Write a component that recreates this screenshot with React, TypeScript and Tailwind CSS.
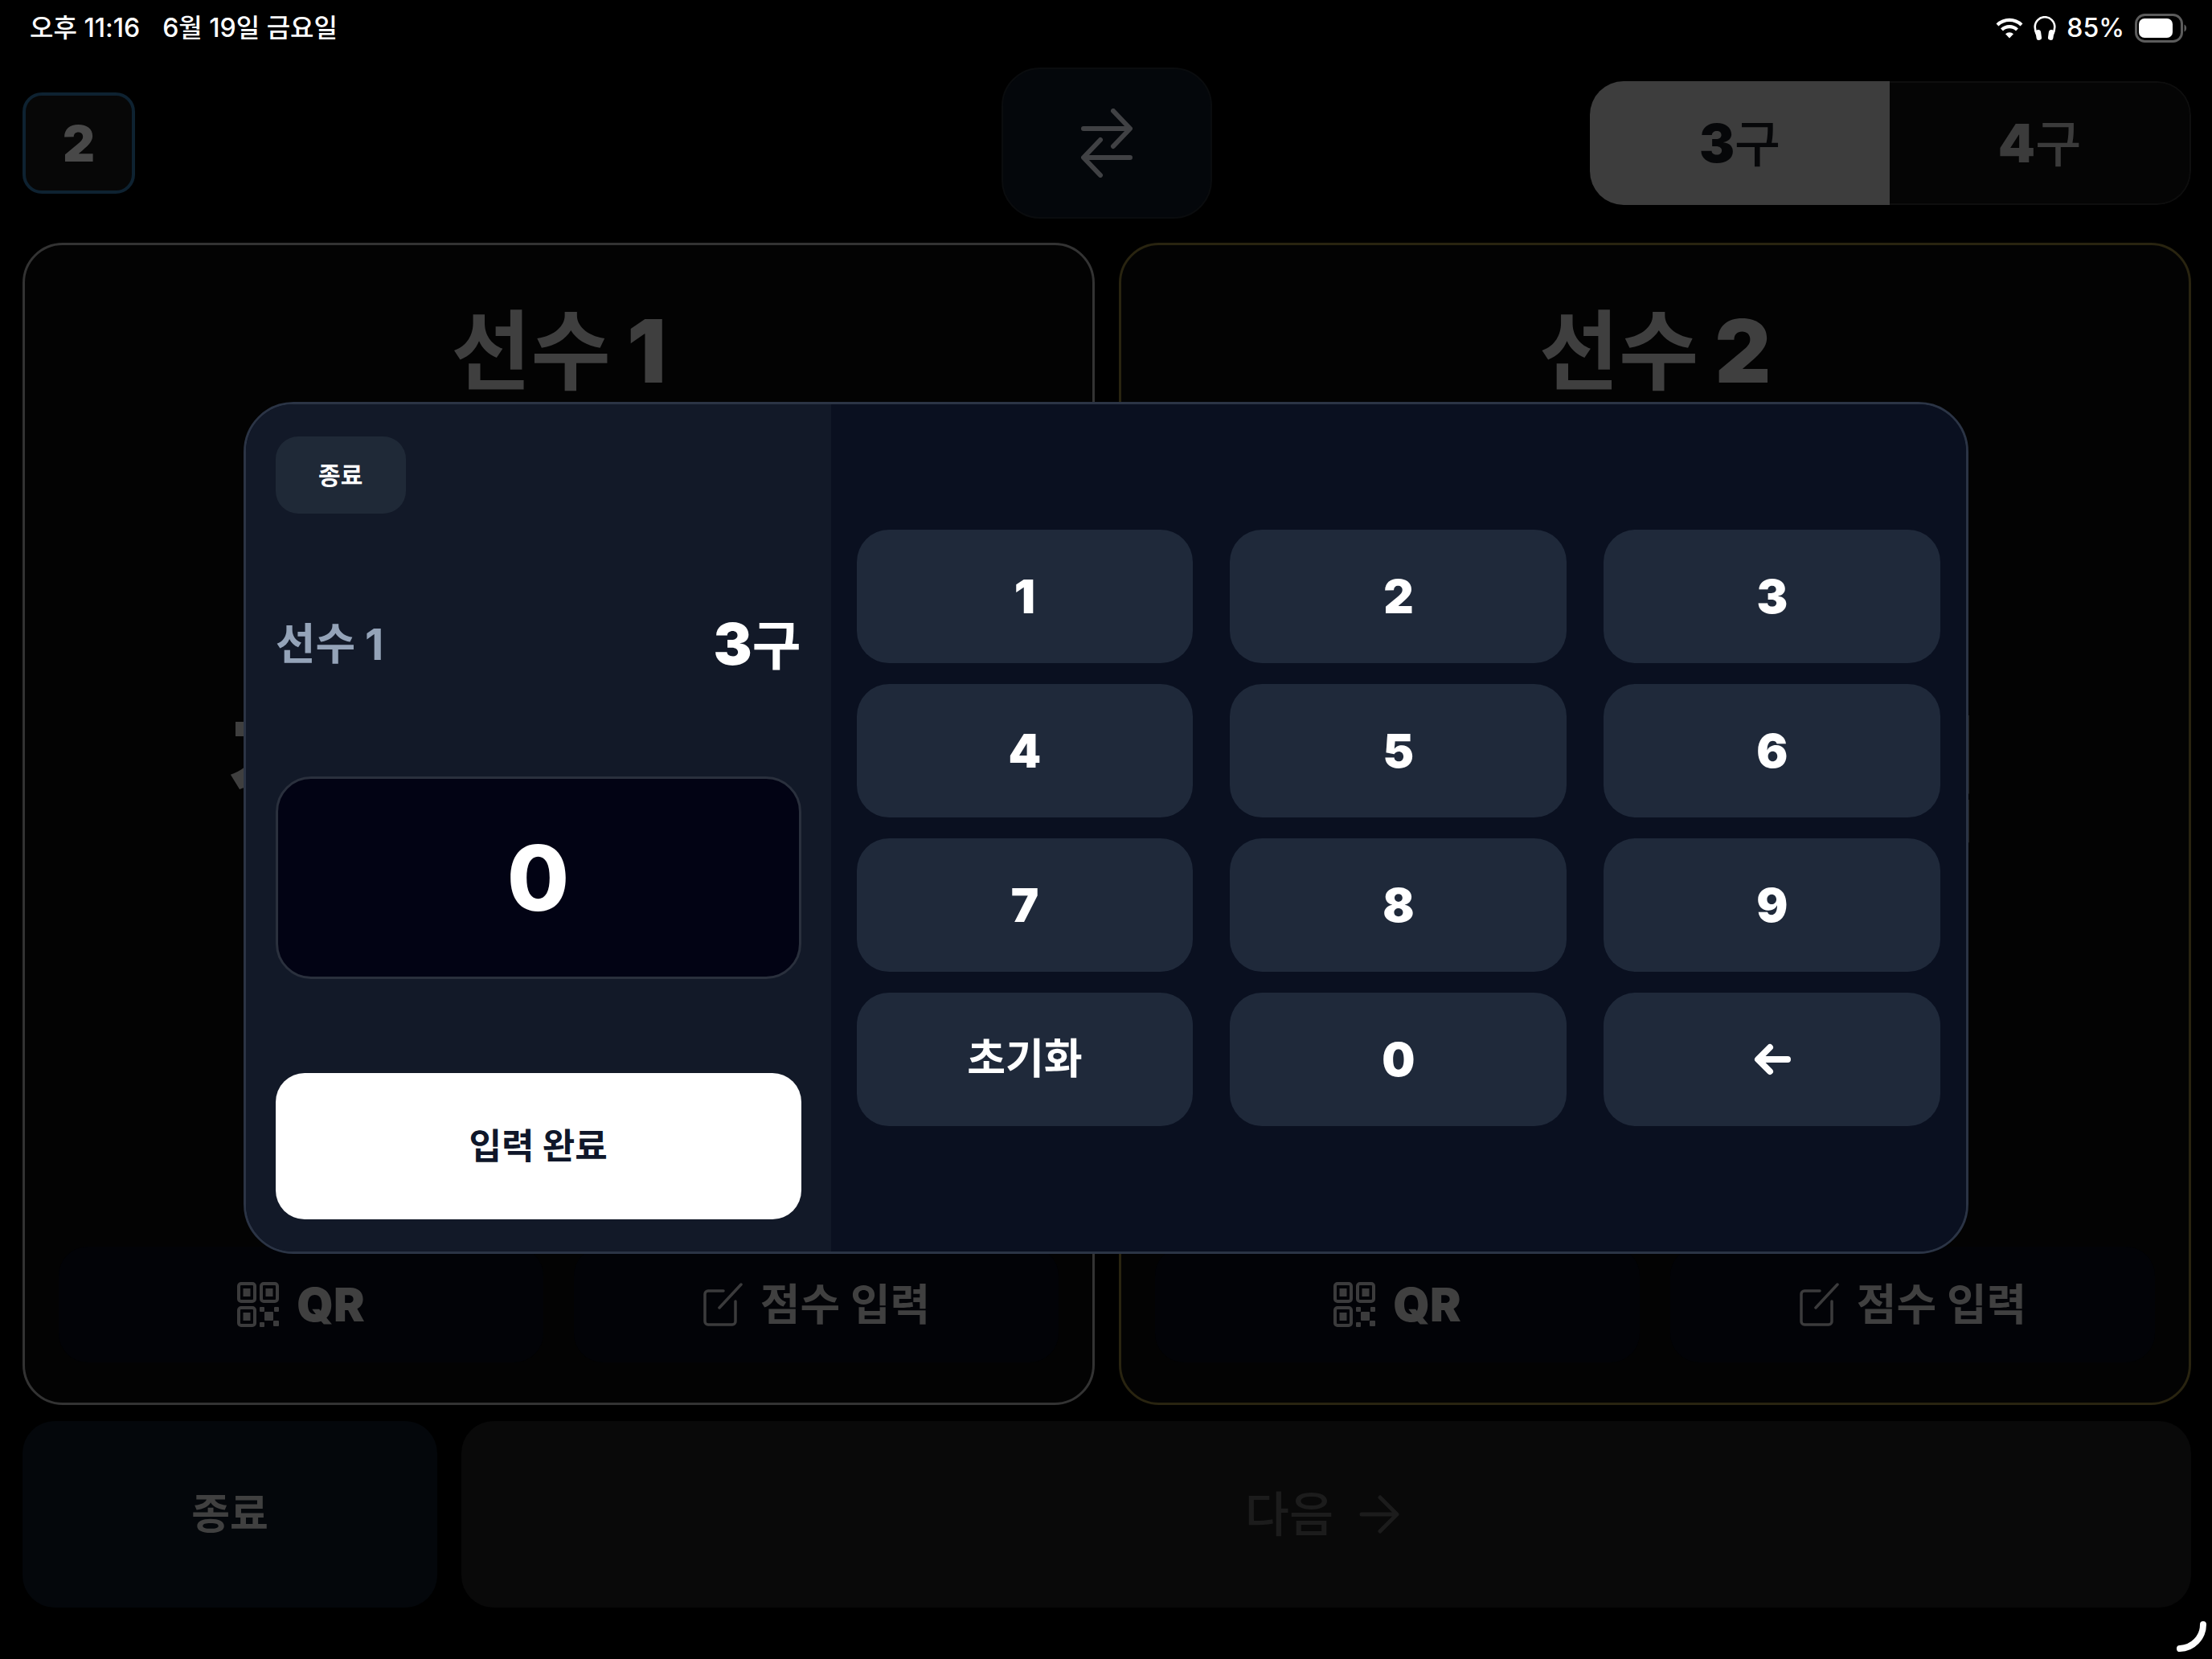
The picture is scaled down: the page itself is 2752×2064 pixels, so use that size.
import React from "react";

const FONT = "font-[Inter,'Noto_Sans_CJK_KR',sans-serif]";

function Wifi() {
  return (
    <svg viewBox="0 0 34 26" className="h-[26px] w-[34px]" fill="none" aria-hidden="true">
      <path d="M2 9a21.500 21.500 0 0 1 30 0M7.500 15a13.500 13.500 0 0 1 19 0" stroke="#fff" strokeWidth="4.200" />
      <path d="M17 25.500l-5-5.300a7.200 7.200 0 0 1 10 0z" fill="#fff" />
    </svg>
  );
}

function Headphones() {
  return (
    <svg viewBox="0 0 28 30" className="h-[30px] w-[28px]" fill="none" aria-hidden="true">
      <path d="M4.500 24C2.600 20 1.700 17 1.700 13.500a12.300 12.300 0 0 1 24.600 0c0 3.500-.9 6.500-2.800 10.500" stroke="#fff" strokeWidth="2.600" />
      <rect x="3" y="17" width="6.500" height="13" rx="3" fill="#fff" transform="rotate(-8 6 23)" />
      <rect x="18.500" y="17" width="6.500" height="13" rx="3" fill="#fff" transform="rotate(8 22 23)" />
    </svg>
  );
}

function Battery() {
  return (
    <svg viewBox="0 0 66 36" className="h-[36px] w-[66px]" fill="none" aria-hidden="true">
      <rect x="1.500" y="1.500" width="57" height="33" rx="11" stroke="#5c5c5c" strokeWidth="3" />
      <rect x="5" y="6" width="42" height="24" rx="7" fill="#fff" />
      <path d="M61.500 13.500c3.500 1 3.500 8 0 9z" fill="#5c5c5c" />
    </svg>
  );
}

function Swap() {
  return (
    <svg viewBox="0 0 64 86" className="h-[86px] w-[64px]" fill="none" stroke="#404144" strokeWidth="6" strokeLinecap="round" strokeLinejoin="round" aria-hidden="true">
      <path d="M3 25h57M40 3l21 22-21 22M61 61H4M24 39L3 61l21 22" />
    </svg>
  );
}

function QrIcon() {
  return (
    <svg viewBox="0 0 52 56" className="h-[56px] w-[52px]" fill="#3b3b3c" aria-hidden="true">
      <g fill="none" stroke="#3b3b3c" strokeWidth="4">
        <rect x="2" y="2" width="20" height="22" rx="3" />
        <rect x="30" y="2" width="20" height="22" rx="3" />
        <rect x="2" y="32" width="20" height="22" rx="3" />
      </g>
      <rect x="7.500" y="8" width="9" height="10" />
      <rect x="35.500" y="8" width="9" height="10" />
      <rect x="7.500" y="38" width="9" height="10" />
      <rect x="28" y="31" width="6" height="6" rx="1" />
      <rect x="46" y="31" width="6" height="6" rx="1" />
      <rect x="34" y="37" width="11" height="11" rx="1" />
      <rect x="28" y="50" width="6" height="6" rx="1" />
      <rect x="45" y="48" width="7" height="7" rx="1" />
    </svg>
  );
}

function EditIcon() {
  return (
    <svg viewBox="0 0 50 56" className="h-[56px] w-[50px]" fill="none" stroke="#3b3b3c" strokeWidth="3.500" strokeLinecap="round" aria-hidden="true">
      <path d="M26 11H7a4 4 0 0 0-4 4v34a4 4 0 0 0 4 4h30a4 4 0 0 0 4-4V24M48 3L21 32" />
    </svg>
  );
}

function Player({ number, tone }: { number: number; tone: string }) {
  return (
    <section className={`flex flex-1 flex-col justify-between overflow-hidden rounded-[50px] border-[3px] bg-[#030303] px-[42px] pt-[62px] pb-[50px] ${tone}`}>
      <h2 className="flex justify-center gap-[20px] text-[108px] leading-[140px] font-bold text-[#3f3f3f]">
        <span>선수</span>
        <span className="font-black">{number}</span>
      </h2>
      <p className="pr-[6px] pb-[116px] text-center text-[170px] leading-[200px] font-bold whitespace-nowrap text-[#3f3f3f]">점수 미입력</p>
      <div className="flex gap-[38px]">
        <button type="button" className="flex h-[144px] flex-1 items-center justify-center gap-[22px] rounded-[36px] bg-[#020307] text-[58px] font-black text-[#404040]">
          <QrIcon />
          QR
        </button>
        <button type="button" className="flex h-[144px] flex-1 items-center justify-center gap-[22px] rounded-[36px] bg-[#020307] text-[54px] font-bold text-[#404040]">
          <EditIcon />
          점수 입력
        </button>
      </div>
    </section>
  );
}

const KEYS = ["1", "2", "3", "4", "5", "6", "7", "8", "9", "초기화", "0", "←"];

function ArrowKey() {
  return (
    <svg viewBox="0 0 48 40" className="h-[40px] w-[48px]" fill="none" stroke="#fff" strokeWidth="8" strokeLinecap="round" strokeLinejoin="round" aria-hidden="true">
      <path d="M43 20H7M21 5L6 20l15 15" />
    </svg>
  );
}

function Keypad() {
  return (
    <div className="flex flex-1 items-center bg-[#0a1020] px-[32px]">
      <div className="grid w-full grid-cols-3 gap-x-[46px] gap-y-[26px]">
        {KEYS.map((k) => (
          <button
            key={k}
            type="button"
            aria-label={k === "←" ? "지우기" : undefined}
            className={`flex h-[166px] items-center justify-center rounded-[40px] bg-[#1f293a] text-white ${k === "초기화" ? "text-[52px] font-bold" : "text-[58px] font-black"}`}
          >
            {k === "←" ? <ArrowKey /> : k}
          </button>
        ))}
      </div>
    </div>
  );
}

function ScoreDialog() {
  return (
    <div className="absolute inset-0 flex items-center justify-center pb-[4px]">
      <div role="dialog" aria-modal="true" aria-label="점수 입력" className="flex h-[1060px] w-[78%] overflow-hidden rounded-[62px] border-[3px] border-[#2b3445] bg-[#0a1020]">
        <div className="flex w-[34%] flex-col justify-between bg-[#121928] px-[37px] py-[40px]">
          <button type="button" className="h-[96px] w-[162px] rounded-[28px] bg-[#1f2937] text-[30px] font-bold text-white">종료</button>
          <div className="flex items-center justify-between leading-[90px]">
            <span className="flex gap-[12px] text-[54px] font-bold text-[#94a3b8]">
              <span>선수</span>
              <span>1</span>
            </span>
            <span className="text-[72px] font-black text-white">
              3<span className="text-[66px] font-bold">구</span>
            </span>
          </div>
          <output className="flex h-[252px] items-center justify-center rounded-[44px] border-[3px] border-[#2a303d] bg-[#020314] text-[112px] font-extrabold text-white">0</output>
          <button type="button" className="h-[182px] rounded-[36px] bg-white text-[44px] font-bold text-[#0f172a]">입력 완료</button>
        </div>
        <Keypad />
      </div>
    </div>
  );
}

export default function App() {
  return (
    <div className={`relative flex min-h-screen flex-col bg-black ${FONT}`}>
      <div className="flex h-[70px] items-center justify-between pr-[30px] pl-[37px] text-[32px] font-medium text-white">
        <div className="flex gap-[28px]">
          <span>오후 11:16</span>
          <span>6월 19일 금요일</span>
        </div>
        <div className="flex items-center gap-[13px]">
          <Wifi />
          <Headphones />
          <span>85%</span>
          <Battery />
        </div>
      </div>

      <main className="flex flex-1 flex-col pt-[14px] pr-[26px] pb-[64px] pl-[28px]">
        <header className="grid grid-cols-[1fr_auto_1fr] items-center">
          <button type="button" className="h-[126px] w-[140px] rounded-[24px] border-4 border-[#0e2231] bg-[#070707] text-[62px] font-black text-[#484848]">2</button>
          <button type="button" aria-label="선수 교체" className="flex h-[188px] w-[262px] items-center justify-center rounded-[48px] border-2 border-[#0a0c0e] bg-[#04070b]">
            <Swap />
          </button>
          <div role="group" aria-label="경기 종류" className="flex h-[154px] w-[748px] justify-self-end overflow-hidden rounded-[42px] text-[66px] font-black">
            <button type="button" aria-pressed="true" className="flex-1 bg-[#3d3d3d] text-[#060709]">
              3<span className="text-[62px] font-medium">구</span>
            </button>
            <button type="button" aria-pressed="false" className="flex-1 rounded-r-[42px] border-2 border-l-0 border-[#0e0e0e] bg-[#050505] text-[#3b3b3b]">
              4<span className="text-[62px] font-medium">구</span>
            </button>
          </div>
        </header>

        <div className="mt-[30px] flex flex-1 gap-[30px]">
          <Player number={1} tone="border-[#333333]" />
          <Player number={2} tone="border-[#292410]" />
        </div>

        <footer className="mt-[20px] flex gap-[30px]">
          <button type="button" className="h-[232px] w-[516px] rounded-[40px] bg-[#04070b] text-[52px] font-bold text-[#404040]">종료</button>
          <button type="button" disabled className="flex h-[232px] flex-1 items-center justify-center gap-[32px] rounded-[40px] bg-[#090909] pr-[10px] text-[60px] font-medium text-[#1c1c1c]">
            다음
            <svg viewBox="0 0 50 50" className="h-[50px] w-[50px]" fill="none" stroke="#1c1c1c" strokeWidth="5" strokeLinecap="round" strokeLinejoin="round" aria-hidden="true">
              <path d="M3 25h43M26 4l21 21-21 21" />
            </svg>
          </button>
        </footer>
      </main>

      <ScoreDialog />

      <svg viewBox="0 0 40 40" className="absolute right-[6px] bottom-[8px] h-[40px] w-[40px]" fill="none" stroke="#fff" strokeWidth="8" strokeLinecap="round" aria-hidden="true">
        <path d="M35 5A30 30 0 0 1 6 35" />
      </svg>
    </div>
  );
}
